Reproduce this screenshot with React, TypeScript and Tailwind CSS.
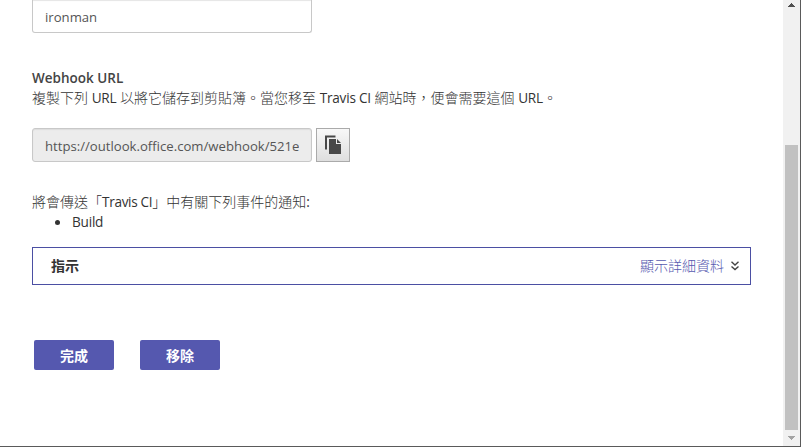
import React from 'react';

const base = 'font-["Open_Sans","Noto_Sans_CJK_TC",sans-serif]';

function En({ children, className = '' }: { children: React.ReactNode; className?: string }) {
  return <span className={`text-[13.6px] font-normal tracking-[-0.22px] ${className}`}>{children}</span>;
}

function ActionButton({ label }: { label: string }) {
  return (
    <button className="flex h-[30px] w-20 items-center justify-center rounded-[2px] bg-[#5558af] pt-px text-sm leading-5 font-bold text-white">
      {label}
    </button>
  );
}

function CopyIcon() {
  return (
    <svg width="18" height="20" viewBox="0 0 18 20" fill="#484848">
      <path d="M1 0.5h10.5v2H3v12H1z" />
      <path d="M5 4h7v5h5v10H5z" />
      <path d="M13 4l4 4h-4z" />
    </svg>
  );
}

function Scrollbar() {
  return (
    <div className="flex w-[17px] shrink-0 flex-col items-center bg-[#f1f1f1]">
      <svg width="17" height="145" viewBox="0 0 17 145" fill="#505050" shapeRendering="crispEdges">
        <path d="M8 3h1v1h1v1h1v1h1v1H5V6h1V5h1V4h1z" />
      </svg>
      <div className="h-[285px] w-[13px] bg-[#c1c1c1]" />
      <svg width="17" height="16" viewBox="0 0 17 16" fill="#a3a3a3" shapeRendering="crispEdges">
        <path d="M5 6h7v1h-1v1h-1v1H9v1H8V9H7V8H6V7H5z" />
      </svg>
    </div>
  );
}

export default function App() {
  return (
    <div className={`${base} flex h-[447px] w-[801px] overflow-hidden border-r border-b border-[#5a5a5a] bg-white text-sm leading-5 text-[#333]`}>
      <main className="flex w-[783px] shrink-0 flex-col pl-8">
        <div className="flex h-[33px] w-[280px] items-center rounded-b-[3px] border border-t-0 border-[#c8c8c8] pt-[2px] pl-3 text-[13.15px] text-[#555] shadow-[inset_0_2px_1px_-1px_#e5e5e5]">
          <span>ironman</span>
        </div>

        <h2 className="mt-[35px] h-5 text-[13.5px] leading-5 font-semibold text-[#444]">Webhook URL</h2>
        <p className="h-5 font-light whitespace-nowrap">
          複製下列 <En>URL</En> 以將它儲存到剪貼簿。當您移至 <En>Travis CI</En> 網站時，便會需要這個 <En>URL</En>。
        </p>

        <div className="mt-5 flex gap-1">
          <div className="flex h-[34px] w-[280px] items-center rounded-[3px] border border-[#c8c8c8] bg-[#ececec] px-3 pt-[2px] text-[13.15px] text-[#555] shadow-[inset_0_1px_1px_#ddd]">
            <span className="w-[254px] overflow-hidden whitespace-nowrap">https://outlook.office.com/webhook/521e</span>
          </div>
          <button className="flex h-[34px] w-[34px] items-center justify-center border border-[#aaa] bg-linear-to-b from-[#f8f8f8] to-[#dedede]">
            <CopyIcon />
          </button>
        </div>

        <p className="mt-[30px] h-5 font-light whitespace-nowrap">
          將會傳送「<En className="tracking-[-0.32px]">Travis CI</En>」中有關下列事件的通知<En>:</En>
        </p>
        <ul className="flex h-5 items-center pl-[23px]">
          <li className="flex items-center gap-3">
            <span className="h-[5px] w-[5px] rounded-full bg-[#333]" />
            <En>Build</En>
          </li>
        </ul>

        <section className="mt-[15px] flex h-[38px] w-[719px] items-center justify-between border border-[#4b4fa3] pr-[11px] pl-[18px]">
          <strong className="font-bold">指示</strong>
          <a className="flex items-center gap-[7px] font-light text-[#5558af]">
            <span>顯示詳細資料</span>
            <svg width="8" height="10" viewBox="0 0 8 10" fill="none" stroke="#444" strokeWidth="1.4">
              <path d="M0.5 0.8l3.5 3.2 3.5-3.2M0.5 5.4l3.5 3.2 3.5-3.2" />
            </svg>
          </a>
        </section>

        <div className="mt-[55px] flex gap-[26px] pl-[2px]">
          <ActionButton label="完成" />
          <ActionButton label="移除" />
        </div>
      </main>
      <Scrollbar />
    </div>
  );
}
